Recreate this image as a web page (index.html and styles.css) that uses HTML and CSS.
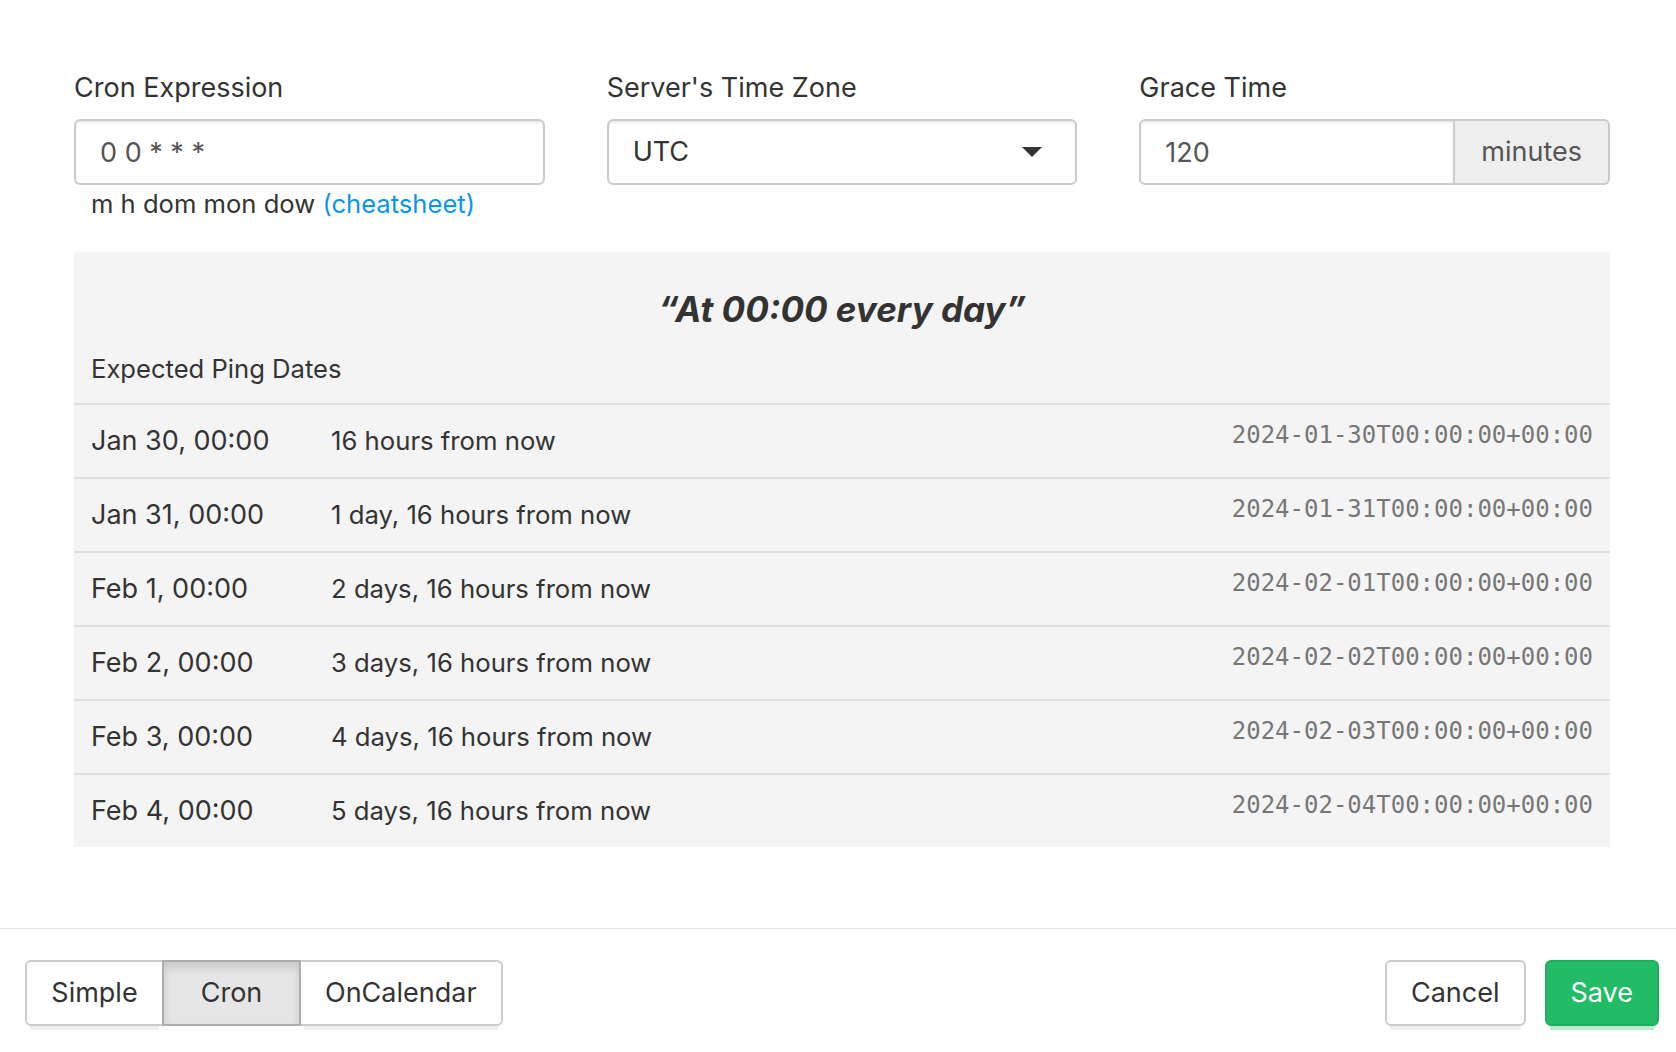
FILE: index.html
```html
<!DOCTYPE html>
<html lang="en">

<head>
    <meta charset="UTF-8">
    <meta name="viewport" content="width=device-width, initial-scale=1.0">
    <title>Change Schedule</title>
    <link rel="stylesheet" href="styles.css">
</head>

<body>
    <div class="modal">
        <div class="modal-body">
            <div class="fields">
                <div class="form-group">
                    <label for="schedule">Cron Expression</label>
                    <input type="text" id="schedule" class="form-control" value="0 0 * * *">
                    <div class="help-block">m h dom mon dow <a href="#">(cheatsheet)</a></div>
                </div>

                <div class="form-group">
                    <label>Server's Time Zone</label>
                    <div class="form-control select">
                        <span>UTC</span>
                        <span class="caret"></span>
                    </div>
                </div>

                <div class="form-group">
                    <label for="grace">Grace Time</label>
                    <div class="input-group">
                        <input type="text" id="grace" class="form-control" value="120">
                        <span class="addon">minutes</span>
                    </div>
                </div>
            </div>

            <div class="cron-preview">
                <p class="desc">“At 00:00 every day”</p>
                <p class="title">Expected Ping Dates</p>
                <table>
                    <tr>
                        <td class="date">Jan 30, 00:00</td>
                        <td class="rel">16 hours from now</td>
                        <td class="iso">2024-01-30T00:00:00+00:00</td>
                    </tr>
                    <tr>
                        <td class="date">Jan 31, 00:00</td>
                        <td class="rel">1 day, 16 hours from now</td>
                        <td class="iso">2024-01-31T00:00:00+00:00</td>
                    </tr>
                    <tr>
                        <td class="date">Feb 1, 00:00</td>
                        <td class="rel">2 days, 16 hours from now</td>
                        <td class="iso">2024-02-01T00:00:00+00:00</td>
                    </tr>
                    <tr>
                        <td class="date">Feb 2, 00:00</td>
                        <td class="rel">3 days, 16 hours from now</td>
                        <td class="iso">2024-02-02T00:00:00+00:00</td>
                    </tr>
                    <tr>
                        <td class="date">Feb 3, 00:00</td>
                        <td class="rel">4 days, 16 hours from now</td>
                        <td class="iso">2024-02-03T00:00:00+00:00</td>
                    </tr>
                    <tr>
                        <td class="date">Feb 4, 00:00</td>
                        <td class="rel">5 days, 16 hours from now</td>
                        <td class="iso">2024-02-04T00:00:00+00:00</td>
                    </tr>
                </table>
            </div>
        </div>

        <div class="modal-footer">
            <div class="btn-group">
                <button class="btn">Simple</button>
                <button class="btn active">Cron</button>
                <button class="btn">OnCalendar</button>
            </div>
            <div class="actions">
                <button class="btn">Cancel</button>
                <button class="btn btn-primary">Save</button>
            </div>
        </div>
    </div>
</body>

</html>
```

FILE: styles.css
```css
body {
    font-family: Inter, "Noto Sans", sans-serif;
    font-size: 27px;
    line-height: 40px;
    color: #333;
    margin: 0;
    padding: 0;
    background-color: #fff;
}

.modal-body {
    padding: 68px 66px 81px 74px;
}

.fields {
    display: grid;
    grid-template-columns: 1fr 1fr 1fr;
    gap: 62px;
}

.form-group label {
    display: block;
    margin-bottom: 11px;
}

.form-control {
    display: block;
    box-sizing: border-box;
    width: 100%;
    height: 66px;
    padding: 11px 24px;
    font-family: inherit;
    font-size: 27px;
    line-height: 40px;
    color: #555;
    background-color: #fff;
    border: 2px solid #ccc;
    border-radius: 6px;
    box-shadow: inset 0 2px 2px rgba(0, 0, 0, 0.075);
    outline: none;
}

.select {
    display: flex;
    justify-content: space-between;
    align-items: center;
    color: #333;
    padding-right: 33px;
}

.caret {
    width: 0;
    height: 0;
    border-left: 10px solid transparent;
    border-right: 10px solid transparent;
    border-top: 10px solid #333;
}

.help-block {
    font-size: 25.6px;
    line-height: 38px;
    padding-left: 17px;
    margin-bottom: 29px;
}

.help-block a {
    color: #0d95e8;
    text-decoration: none;
}

.input-group {
    display: flex;
}

.input-group .form-control {
    flex: 1;
    border-radius: 6px 0 0 6px;
}

.input-group .addon {
    padding: 11px 26px;
    color: #555;
    background-color: #eee;
    border: 2px solid #ccc;
    border-left: none;
    border-radius: 0 6px 6px 0;
}

.cron-preview {
    background-color: #f4f4f4;
    padding-top: 32px;
}

.cron-preview .desc {
    margin: 0 0 16px 0;
    text-align: center;
    font-size: 35px;
    line-height: 50px;
    font-weight: bold;
    font-style: italic;
}

.cron-preview .title {
    margin: 0;
    padding: 0 17px 15px;
    font-size: 25.6px;
    line-height: 38px;
}

.cron-preview table {
    width: 100%;
    border-collapse: collapse;
}

.cron-preview td {
    border-top: 2px solid #ddd;
    padding: 16px 17px;
    white-space: nowrap;
}

.cron-preview td.date {
    width: 206px;
}

.cron-preview td.rel {
    font-size: 25.7px;
}

.cron-preview td.iso {
    text-align: right;
    vertical-align: top;
    padding-top: 15px;
    font-family: "DejaVu Sans Mono", monospace;
    font-size: 24px;
    line-height: 30px;
    color: #777;
}

.modal-footer {
    display: flex;
    justify-content: space-between;
    border-top: 1px solid #e5e5e5;
    padding: 31px 17px 20px 25px;
}

.btn {
    box-sizing: border-box;
    height: 66px;
    padding: 11px 24px;
    font-family: inherit;
    font-size: 27px;
    line-height: 40px;
    color: #333;
    background-color: #fff;
    border: 2px solid #ccc;
    border-radius: 6px;
    box-shadow: 0 9px 0 -5px rgba(0, 0, 0, 0.06);
    cursor: pointer;
}

.btn-group {
    display: flex;
}

.btn-group .btn {
    min-width: 139px;
    border-radius: 0;
    margin-left: -2px;
}

.btn-group .btn:first-child {
    margin-left: 0;
    border-radius: 6px 0 0 6px;
}

.btn-group .btn:last-child {
    border-radius: 0 6px 6px 0;
}

.btn-group .btn.active {
    position: relative;
    background-color: #e6e6e6;
    border-color: #adadad;
    box-shadow: inset 0 6px 10px rgba(0, 0, 0, 0.125);
}

.actions {
    display: flex;
    gap: 19px;
}

.btn-primary {
    color: #fff;
    background-color: #22bb66;
    border-color: #1fae5f;
    box-shadow: 0 9px 0 -5px rgba(34, 187, 102, 0.3);
}
```
